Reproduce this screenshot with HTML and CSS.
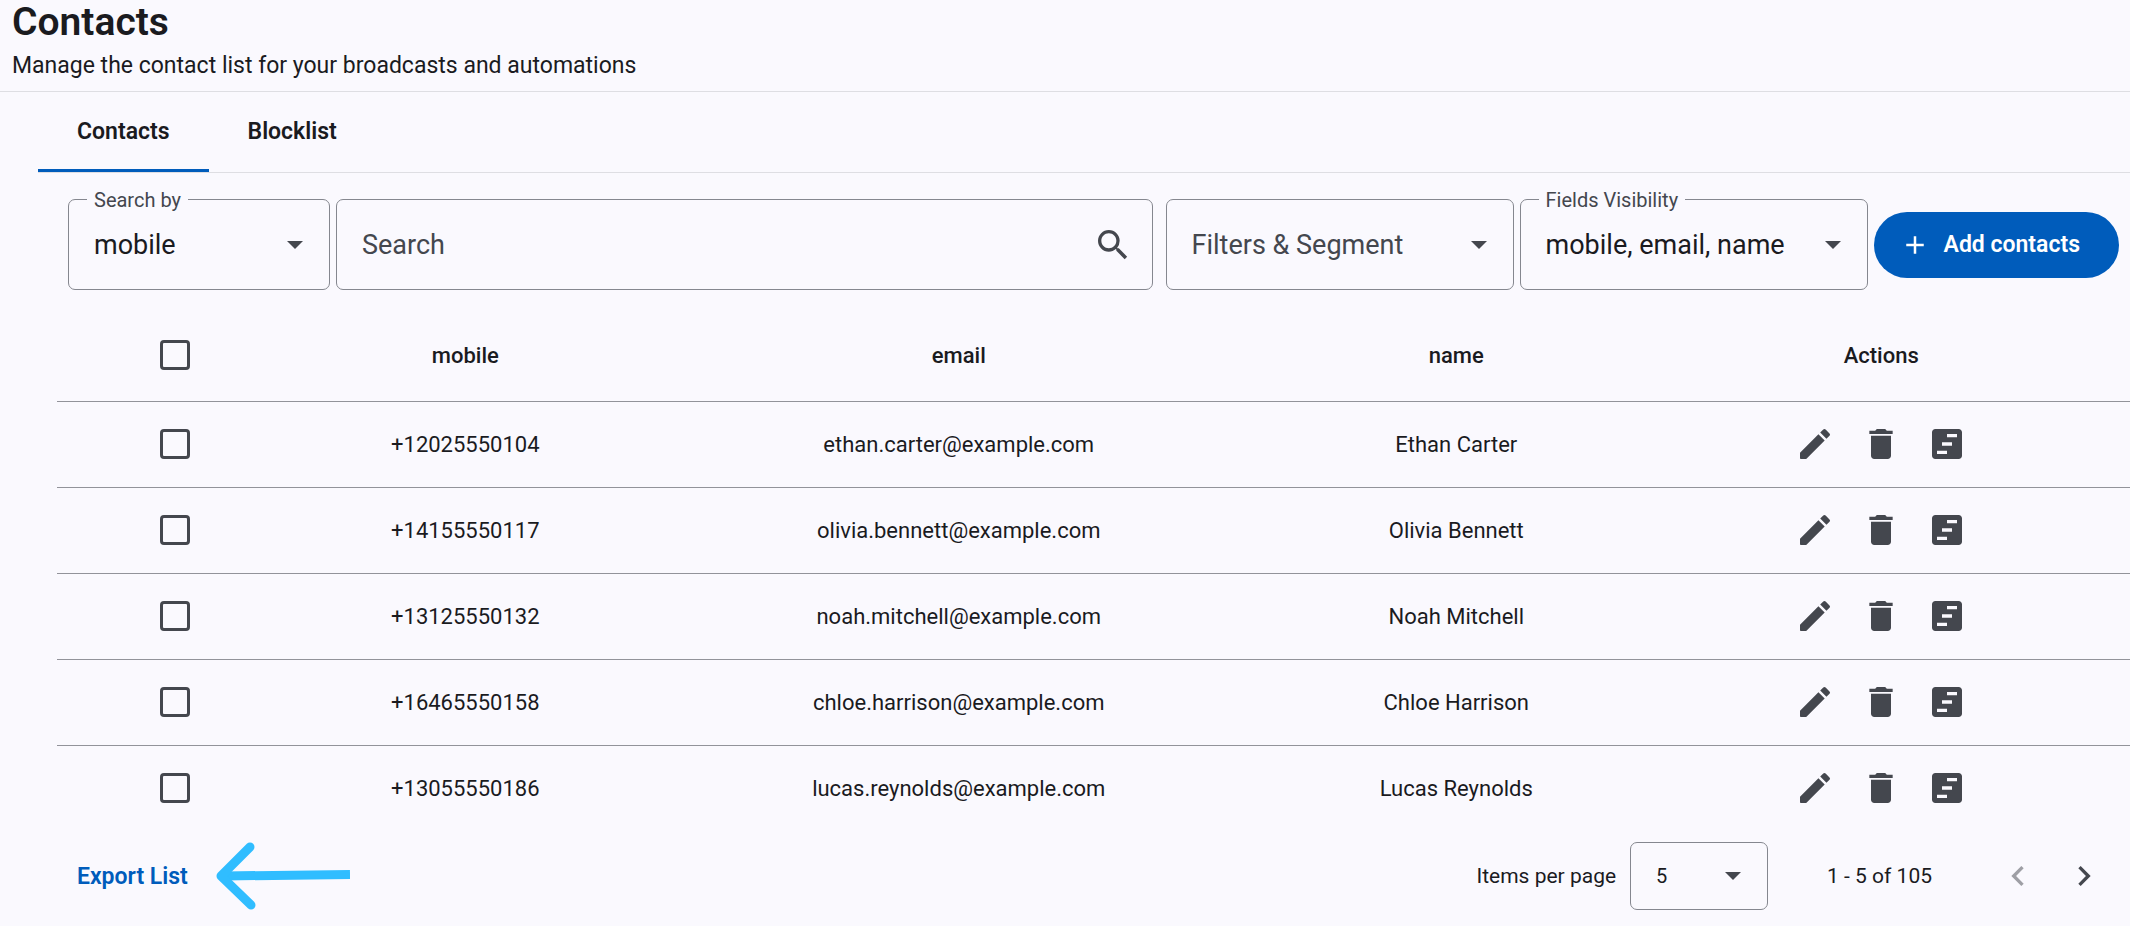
FILE: index.html
```html
<!DOCTYPE html>
<html lang="en">
    <head>
        <meta charset="UTF-8">
        <meta name="viewport" content="width=device-width, initial-scale=1.0">
        <title>Contacts</title>
        <link rel="stylesheet" href="styles.css">
    </head>
    <body>
        <!-- Shared icons -->
        <svg class="sprite" aria-hidden="true">
            <symbol id="edit" viewBox="0 0 24 24"><path d="M3 17.46v3.04c0 .28.22.5.5.5h3.04c.13 0 .26-.05.35-.15L17.81 9.94l-3.75-3.75L3.15 17.1c-.1.1-.15.22-.15.36zM20.71 7.04a.996.996 0 0 0 0-1.41l-2.34-2.34a.996.996 0 0 0-1.41 0l-1.83 1.83 3.75 3.75 1.83-1.83z"/></symbol>
            <symbol id="delete" viewBox="0 0 24 24"><path d="M6 19c0 1.100.9 2 2 2h8c1.100 0 2-.9 2-2V7H6v12zM19 4h-3.500l-1-1h-5l-1 1H5v2h14V4z"/></symbol>
            <symbol id="log" viewBox="0 0 24 24"><path fill-rule="evenodd" d="M19 3H5c-1.100 0-2 .9-2 2v14c0 1.100.9 2 2 2h14c1.100 0 2-.9 2-2V5c0-1.100-.9-2-2-2zM12 18H6v-2h6v2zM15 13H9v-2h6v2zM18 8h-6V6h6v2z"/></symbol>
            <symbol id="arrow" viewBox="0 0 16 8"><path d="M0 0h16L8 8z"/></symbol>
        </svg>

        <header class="page-header">
            <h1>Contacts</h1>
            <p>Manage the contact list for your broadcasts and automations</p>
        </header>

        <main>
            <nav class="tabs">
                <a href="#contacts" class="tab active">Contacts</a>
                <a href="#blocklist" class="tab">Blocklist</a>
            </nav>

            <div class="toolbar">
                <div class="field field-small">
                    <label class="floating" for="search-by">Search by</label>
                    <select id="search-by"><option>mobile</option></select>
                    <svg class="arrow"><use href="#arrow"/></svg>
                </div>
                <div class="field field-search">
                    <input type="text" id="search" placeholder="Search" aria-label="Search">
                    <svg class="icon" viewBox="0 0 24 24"><path d="M15.500 14h-.79l-.28-.27A6.471 6.471 0 0 0 16 9.500 6.500 6.500 0 1 0 9.500 16c1.610 0 3.090-.59 4.230-1.570l.27.28v.79l5 4.990L20.490 19l-4.990-5zm-6 0C7.010 14 5 11.990 5 9.500S7.010 5 9.500 5 14 7.010 14 9.500 11.990 14 9.500 14z"/></svg>
                </div>
                <div class="field field-large muted">
                    <select id="filters" aria-label="Filters &amp; Segment"><option>Filters &amp; Segment</option></select>
                    <svg class="arrow"><use href="#arrow"/></svg>
                </div>
                <div class="field field-large">
                    <label class="floating" for="visibility">Fields Visibility</label>
                    <select id="visibility"><option>mobile, email, name</option></select>
                    <svg class="arrow"><use href="#arrow"/></svg>
                </div>
                <button class="add-button">
                    <svg class="plus" viewBox="0 0 24 24"><path d="M19 13h-6v6h-2v-6H5v-2h6V5h2v6h6v2z"/></svg>
                    Add contacts
                </button>
            </div>

            <table class="contacts">
                <colgroup>
                    <col class="col-check">
                    <col class="col-mobile">
                    <col class="col-email">
                    <col class="col-name">
                    <col class="col-actions">
                </colgroup>
                <thead>
                    <tr>
                        <th><input type="checkbox" aria-label="Select all"></th>
                        <th>mobile</th>
                        <th>email</th>
                        <th>name</th>
                        <th>Actions</th>
                    </tr>
                </thead>
                <tbody>
                    <tr>
                        <td><input type="checkbox" aria-label="Select Ethan Carter"></td>
                        <td>+12025550104</td>
                        <td>ethan.carter@example.com</td>
                        <td>Ethan Carter</td>
                        <td>
                            <div class="actions">
                                <button aria-label="Edit"><svg class="icon"><use href="#edit"/></svg></button>
                                <button aria-label="Delete"><svg class="icon"><use href="#delete"/></svg></button>
                                <button aria-label="Log"><svg class="icon"><use href="#log"/></svg></button>
                            </div>
                        </td>
                    </tr>
                    <tr>
                        <td><input type="checkbox" aria-label="Select Olivia Bennett"></td>
                        <td>+14155550117</td>
                        <td>olivia.bennett@example.com</td>
                        <td>Olivia Bennett</td>
                        <td>
                            <div class="actions">
                                <button aria-label="Edit"><svg class="icon"><use href="#edit"/></svg></button>
                                <button aria-label="Delete"><svg class="icon"><use href="#delete"/></svg></button>
                                <button aria-label="Log"><svg class="icon"><use href="#log"/></svg></button>
                            </div>
                        </td>
                    </tr>
                    <tr>
                        <td><input type="checkbox" aria-label="Select Noah Mitchell"></td>
                        <td>+13125550132</td>
                        <td>noah.mitchell@example.com</td>
                        <td>Noah Mitchell</td>
                        <td>
                            <div class="actions">
                                <button aria-label="Edit"><svg class="icon"><use href="#edit"/></svg></button>
                                <button aria-label="Delete"><svg class="icon"><use href="#delete"/></svg></button>
                                <button aria-label="Log"><svg class="icon"><use href="#log"/></svg></button>
                            </div>
                        </td>
                    </tr>
                    <tr>
                        <td><input type="checkbox" aria-label="Select Chloe Harrison"></td>
                        <td>+16465550158</td>
                        <td>chloe.harrison@example.com</td>
                        <td>Chloe Harrison</td>
                        <td>
                            <div class="actions">
                                <button aria-label="Edit"><svg class="icon"><use href="#edit"/></svg></button>
                                <button aria-label="Delete"><svg class="icon"><use href="#delete"/></svg></button>
                                <button aria-label="Log"><svg class="icon"><use href="#log"/></svg></button>
                            </div>
                        </td>
                    </tr>
                    <tr>
                        <td><input type="checkbox" aria-label="Select Lucas Reynolds"></td>
                        <td>+13055550186</td>
                        <td>lucas.reynolds@example.com</td>
                        <td>Lucas Reynolds</td>
                        <td>
                            <div class="actions">
                                <button aria-label="Edit"><svg class="icon"><use href="#edit"/></svg></button>
                                <button aria-label="Delete"><svg class="icon"><use href="#delete"/></svg></button>
                                <button aria-label="Log"><svg class="icon"><use href="#log"/></svg></button>
                            </div>
                        </td>
                    </tr>
                </tbody>
            </table>

            <footer class="table-footer">
                <button class="export-button">Export List</button>
                <svg class="pointer" viewBox="0 0 134 68"><path d="M134 32.500L8 34" stroke-linecap="butt"/><path d="M34 5L5 34l30 29"/></svg>
                <div class="paginator">
                    <label for="page-size">Items per page</label>
                    <div class="field field-page">
                        <select id="page-size"><option>5</option></select>
                        <svg class="arrow"><use href="#arrow"/></svg>
                    </div>
                    <span class="range">1 - 5 of 105</span>
                    <div class="pager">
                        <button aria-label="Previous page" disabled><svg class="icon" viewBox="0 0 24 24"><path d="M15.410 7.410L14 6l-6 6 6 6 1.410-1.410L10.830 12z"/></svg></button>
                        <button aria-label="Next page"><svg class="icon" viewBox="0 0 24 24"><path d="M10 6L8.590 7.410 13.170 12l-4.580 4.590L10 18l6-6z"/></svg></button>
                    </div>
                </div>
            </footer>
        </main>
    </body>
</html>
```
FILE: styles.css
```css
* {
    box-sizing: border-box;
}

body {
    margin: 0;
    font-family: Roboto, Arial, sans-serif;
    font-size: 22px;
    color: #1a1b1f;
    background-color: #faf9fe;
}

button,
input,
select {
    font-family: inherit;
    color: inherit;
}

button {
    border: none;
    background: none;
    cursor: pointer;
}

.sprite {
    display: none;
}

.icon {
    display: block;
    width: 40px;
    height: 40px;
    fill: #44474e;
}

.page-header {
    padding: 0 12px 10px;
    border-bottom: 1px solid #dedee3;
}

h1 {
    margin: 0;
    font-size: 39px;
    line-height: 45px;
    font-weight: 600;
}

.page-header p {
    margin: 6px 0 0;
    font-size: 23px;
    line-height: 30px;
}

/* Tabs */
.tabs {
    display: flex;
    margin-left: 38px;
    border-bottom: 1px solid #dedee3;
}

.tab {
    height: 80px;
    padding: 0 39px;
    line-height: 80px;
    font-size: 23px;
    font-weight: 600;
    color: #1a1b1f;
    text-decoration: none;
}

.tab.active {
    border-bottom: 3px solid #005cbb;
}

/* Toolbar */
.toolbar {
    display: flex;
    align-items: center;
    gap: 6px;
    padding: 26px 11px 0 68px;
}

.field {
    position: relative;
    display: grid;
    align-items: center;
    height: 91px;
    border: 1px solid #85878f;
    border-radius: 7px;
}

.field > * {
    grid-area: 1 / 1;
}

.field-small {
    width: 262px;
}

.field-search {
    flex: 1;
    margin-right: 7px;
}

.field-large {
    width: 348px;
}

.field select,
.field input {
    width: 100%;
    height: 100%;
    padding: 0 25px;
    border: none;
    outline: none;
    font-size: 27px;
    background: transparent;
    appearance: none;
}

.field input::placeholder,
.muted select {
    color: #44474e;
    opacity: 1;
}

.floating {
    position: absolute;
    top: -12px;
    left: 18px;
    padding: 0 7px;
    font-size: 20px;
    line-height: 24px;
    color: #44474e;
    background-color: #faf9fe;
}

.arrow {
    justify-self: end;
    width: 16px;
    height: 8px;
    margin-right: 26px;
    fill: #44474e;
    pointer-events: none;
}

.field-search .icon {
    justify-self: end;
    margin-right: 19px;
}

.add-button {
    display: flex;
    align-items: center;
    gap: 14px;
    height: 66px;
    padding: 0 39px 0 26px;
    border-radius: 33px;
    font-size: 23px;
    font-weight: 600;
    white-space: nowrap;
    color: #ffffff;
    background-color: #005cbb;
}

.plus {
    width: 30px;
    height: 30px;
    fill: #ffffff;
}

/* Table */
.contacts {
    width: calc(100% - 57px);
    margin: 20px 0 0 57px;
    border-collapse: collapse;
    table-layout: fixed;
}

.col-check {
    width: 236px;
}

.col-mobile {
    width: 344px;
}

.col-email {
    width: 31%;
}

.col-name {
    width: 17%;
}

.col-actions {
    width: 24%;
}

th,
td {
    height: 86px;
    padding: 0;
    text-align: center;
}

th {
    height: 91px;
    font-weight: 500;
}

tbody tr {
    border-top: 1px solid #92939a;
}

.contacts input {
    display: block;
    width: 30px;
    height: 30px;
    margin: 0 auto;
    border: 3px solid #44474e;
    border-radius: 4px;
    appearance: none;
}

.contacts input:checked {
    background-color: #005cbb;
}

.actions,
.pager {
    display: flex;
    justify-content: center;
}

.actions button,
.pager button {
    padding: 13px;
}

.pager button:disabled {
    opacity: 0.5;
}

/* Footer */
.table-footer {
    display: flex;
    align-items: center;
    height: 90px;
    padding: 0 13px 0 77px;
}

.export-button {
    padding: 0;
    font-size: 23px;
    font-weight: 600;
    color: #005cbb;
}

.pointer {
    width: 134px;
    height: 68px;
    margin-left: 28px;
    fill: none;
    stroke: #30bdff;
    stroke-width: 9px;
    stroke-linecap: round;
    stroke-linejoin: round;
}

.paginator {
    display: flex;
    align-items: center;
    margin-left: auto;
    font-size: 21px;
}

.field-page {
    width: 138px;
    height: 68px;
    margin: 0 59px 0 14px;
}

.field-page select {
    font-size: 20px;
}

.range {
    margin-right: 53px;
}
```
